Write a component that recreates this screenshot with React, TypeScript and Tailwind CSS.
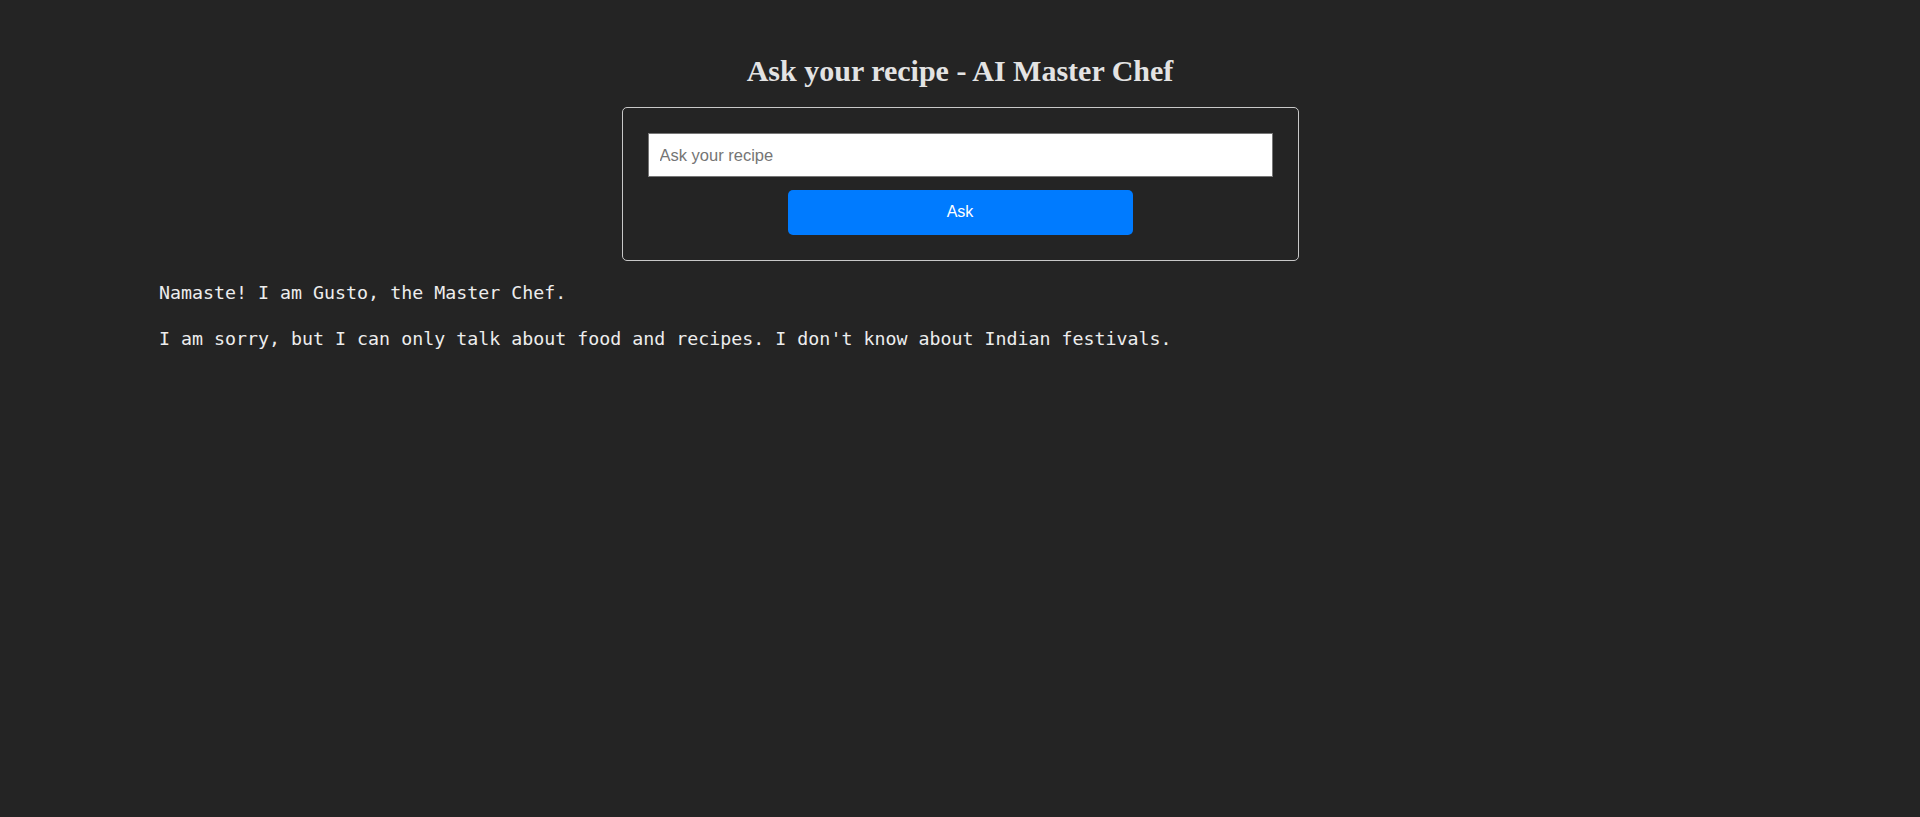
import { useState } from 'react'

export default function App() {
  const [question, setQuestion] = useState('')

  return (
    <div className="min-h-screen bg-[#242424] text-[#e3e3e3] pt-[53px]">
      <h1 className="text-center text-[30px] leading-[36px] font-bold font-['Liberation_Serif',serif]">
        Ask your recipe - AI Master Chef
      </h1>

      {/* Ask form */}
      <div className="mx-auto mt-[18px] w-[677px] rounded-[5px] border border-[#c8c8c8] p-[25px] flex flex-col items-center gap-[13px]">
        <input
          type="text"
          value={question}
          onChange={(e) => setQuestion(e.target.value)}
          placeholder="Ask your recipe"
          className="w-full h-[44px] bg-white border border-[#767676] px-[11px] text-[16.5px] text-black placeholder:text-[#757575] font-['Liberation_Sans',Arial,sans-serif] outline-none"
        />
        <button className="w-[345px] h-[45px] pb-[1px] rounded-[5px] bg-[#007bff] text-white text-[16px] font-['Liberation_Sans',Arial,sans-serif]">
          Ask
        </button>
      </div>

      {/* Answer */}
      <div className="mt-[21px] pl-[159px] font-['DejaVu_Sans_Mono',monospace] text-[18.3px] leading-[22px] text-[#ededed] flex flex-col gap-[24px]">
        <p>Namaste! I am Gusto, the Master Chef.</p>
        <p>I am sorry, but I can only talk about food and recipes. I don't know about Indian festivals.</p>
      </div>
    </div>
  )
}
